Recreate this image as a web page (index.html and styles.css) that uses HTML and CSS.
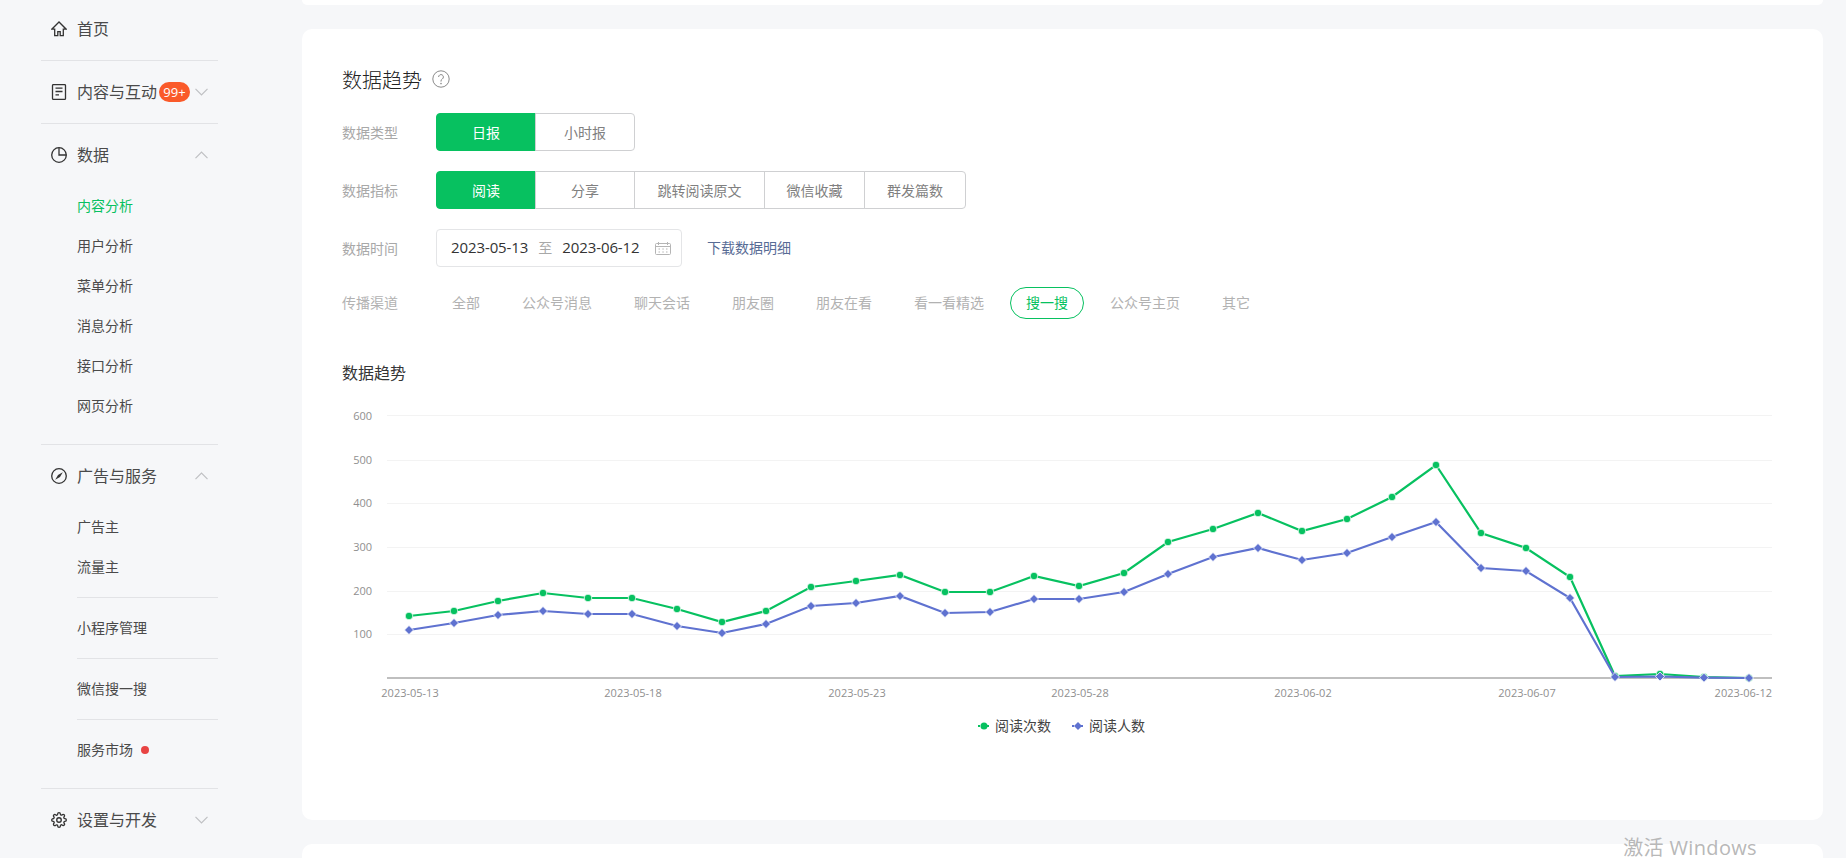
FILE: index.html
```html
<!DOCTYPE html>
<html lang="zh-CN">
<head>
<meta charset="utf-8">
<title>数据趋势</title>
<link rel="stylesheet" href="styles.css">
</head>
<body>
<div class="page">
  <aside class="sidebar">
    <section class="nav-section nav-section--first">
      <div class="nav-row">
        <svg class="nav-icon" viewBox="0 0 16 16"><path d="M8 1 .8 8.200h2.900V14.600h3.100V10.600h2.400V14.600h3.100V8.200h2.900z"/></svg>
        <span>首页</span>
      </div>
    </section>
    <section class="nav-section">
      <div class="nav-row">
        <svg class="nav-icon" viewBox="0 0 16 16"><rect x="1.500" y=".6" width="13" height="14.800" rx="1"/><path d="M4.500 4.200h7M4.500 7.500h7M4.500 10.800h3.500"/></svg>
        <span>内容与互动</span>
        <span class="badge">99+</span>
        <svg class="chevron" viewBox="0 0 13 8"><path d="M.5.8 6.500 6.800 12.500.8"/></svg>
      </div>
    </section>
    <section class="nav-section nav-section--open">
      <div class="nav-row">
        <svg class="nav-icon" viewBox="0 0 16 16"><circle cx="8" cy="8" r="7.300"/><path d="M8 .7V8h7.300"/></svg>
        <span>数据</span>
        <svg class="chevron" viewBox="0 0 13 8"><path d="M.5 7.200 6.500 1.200 12.500 7.200"/></svg>
      </div>
      <div class="sub-list">
        <div class="sub-group">
          <div class="sub-item sub-item--active">内容分析</div>
          <div class="sub-item">用户分析</div>
          <div class="sub-item">菜单分析</div>
          <div class="sub-item">消息分析</div>
          <div class="sub-item">接口分析</div>
          <div class="sub-item">网页分析</div>
        </div>
      </div>
    </section>
    <section class="nav-section nav-section--open">
      <div class="nav-row">
        <svg class="nav-icon" viewBox="0 0 16 16"><circle cx="8" cy="8" r="7.300"/><path class="nav-icon-fill" d="M11.800 4.200 9 9 4.200 11.800 7 7z"/></svg>
        <span>广告与服务</span>
        <svg class="chevron" viewBox="0 0 13 8"><path d="M.5 7.200 6.500 1.200 12.500 7.200"/></svg>
      </div>
      <div class="sub-list">
        <div class="sub-group">
          <div class="sub-item">广告主</div>
          <div class="sub-item">流量主</div>
        </div>
        <div class="sub-group"><div class="sub-item">小程序管理</div></div>
        <div class="sub-group"><div class="sub-item">微信搜一搜</div></div>
        <div class="sub-group">
          <div class="sub-item">服务市场<i class="dot"></i></div>
        </div>
      </div>
    </section>
    <section class="nav-section nav-section--last">
      <div class="nav-row">
        <svg class="nav-icon" viewBox="0 0 24 24"><circle class="nav-icon-thick" cx="12" cy="12" r="3.400"/><path class="nav-icon-thick" d="M19.400 15a1.650 1.650 0 0 0 .33 1.820l.06.06a2 2 0 0 1 0 2.830 2 2 0 0 1-2.830 0l-.06-.06a1.650 1.650 0 0 0-1.820-.33 1.650 1.650 0 0 0-1 1.510V21a2 2 0 0 1-2 2 2 2 0 0 1-2-2v-.09A1.650 1.650 0 0 0 9 19.400a1.650 1.650 0 0 0-1.820.33l-.06.06a2 2 0 0 1-2.830 0 2 2 0 0 1 0-2.830l.06-.06a1.650 1.650 0 0 0 .33-1.820 1.650 1.650 0 0 0-1.510-1H3a2 2 0 0 1-2-2 2 2 0 0 1 2-2h.09A1.650 1.650 0 0 0 4.600 9a1.650 1.650 0 0 0-.33-1.820l-.06-.06a2 2 0 0 1 0-2.830 2 2 0 0 1 2.830 0l.06.06a1.650 1.650 0 0 0 1.820.33H9a1.650 1.650 0 0 0 1-1.510V3a2 2 0 0 1 2-2 2 2 0 0 1 2 2v.09a1.650 1.650 0 0 0 1 1.510 1.650 1.650 0 0 0 1.820-.33l.06-.06a2 2 0 0 1 2.830 0 2 2 0 0 1 0 2.830l-.06.06a1.650 1.650 0 0 0-.33 1.820V9a1.650 1.650 0 0 0 1.510 1H21a2 2 0 0 1 2 2 2 2 0 0 1-2 2h-.09a1.650 1.650 0 0 0-1.510 1z"/></svg>
        <span>设置与开发</span>
        <svg class="chevron" viewBox="0 0 13 8"><path d="M.5.8 6.500 6.800 12.500.8"/></svg>
      </div>
    </section>
  </aside>

  <main class="main">
    <div class="card card--stub"></div>
    <div class="card card--trend">
      <div class="heading">
        <h2 class="heading-title">数据趋势</h2>
        <svg class="help" viewBox="0 0 18 18"><circle cx="9" cy="9" r="8.200"/><path d="M6.600 7a2.400 2.400 0 1 1 3.700 2c-.9.6-1.300 1-1.300 2v.6"/><circle class="help-dot" cx="9" cy="13.600" r=".8"/></svg>
      </div>

      <div class="filter">
        <span class="filter-label">数据类型</span>
        <div class="seg">
          <span class="seg-btn seg-btn--on">日报</span>
          <span class="seg-btn">小时报</span>
        </div>
      </div>

      <div class="filter">
        <span class="filter-label">数据指标</span>
        <div class="seg">
          <span class="seg-btn seg-btn--on">阅读</span>
          <span class="seg-btn">分享</span>
          <span class="seg-btn seg-btn--jump">跳转阅读原文</span>
          <span class="seg-btn seg-btn--fav">微信收藏</span>
          <span class="seg-btn seg-btn--count">群发篇数</span>
        </div>
      </div>

      <div class="filter">
        <span class="filter-label">数据时间</span>
        <div class="date">
          <span class="date-value">2023-05-13</span>
          <span class="date-sep">至</span>
          <span class="date-value">2023-06-12</span>
          <svg class="date-icon" viewBox="0 0 16 13"><rect x=".5" y="1.500" width="15" height="11" rx="1"/><path d="M3.500 0v3M12.500 0v3M.5 4.500h15"/><path class="date-dots" d="M3.500 7h1.500M7.300 7h1.500M11 7h1.500M3.500 10h1.500M7.300 10h1.500M11 10h1.500"/></svg>
        </div>
        <a class="download">下载数据明细</a>
      </div>

      <div class="filter filter--tabs">
        <span class="filter-label filter-label--tabs">传播渠道</span>
        <div class="tabs">
          <span class="tab">全部</span>
          <span class="tab">公众号消息</span>
          <span class="tab">聊天会话</span>
          <span class="tab">朋友圈</span>
          <span class="tab">朋友在看</span>
          <span class="tab">看一看精选</span>
          <span class="tab tab--on">搜一搜</span>
          <span class="tab">公众号主页</span>
          <span class="tab">其它</span>
        </div>
      </div>

      <h3 class="chart-title">数据趋势</h3>

      <svg class="chart" viewBox="342 400 1440 350">
        <defs>
          <marker id="m-green" markerUnits="userSpaceOnUse" markerWidth="12" markerHeight="12" refX="6" refY="6">
            <circle cx="6" cy="6" r="3.800" fill="#07c160" stroke="#fff" stroke-opacity=".75" stroke-width="1"/>
          </marker>
          <marker id="m-blue" markerUnits="userSpaceOnUse" markerWidth="12" markerHeight="12" refX="6" refY="6">
            <path d="M6 1.500 10.500 6 6 10.500 1.500 6z" fill="#5f72d0" stroke="#fff" stroke-opacity=".75" stroke-width="1"/>
          </marker>
        </defs>
        <g class="grid">
          <path d="M387 415.500H1772M387 460.500H1772M387 503.500H1772M387 547.500H1772M387 591.500H1772M387 634.500H1772"/>
        </g>
        <path class="axis" d="M387 678H1772"/>
        <g class="y-labels">
          <text x="372" y="420">600</text>
          <text x="372" y="464">500</text>
          <text x="372" y="507">400</text>
          <text x="372" y="551">300</text>
          <text x="372" y="595">200</text>
          <text x="372" y="638">100</text>
        </g>
        <g class="x-labels">
          <text x="410" y="697">2023-05-13</text>
          <text x="633" y="697">2023-05-18</text>
          <text x="857" y="697">2023-05-23</text>
          <text x="1080" y="697">2023-05-28</text>
          <text x="1303" y="697">2023-06-02</text>
          <text x="1527" y="697">2023-06-07</text>
          <text class="x-label-end" x="1772" y="697">2023-06-12</text>
        </g>
        <polyline class="line line--green" points="409,616 454,611 498,601 543,593 588,598 632,598 677,609 722,622 766,611 811,587 856,581 900,575 945,592 990,592 1034,576 1079,586 1124,573 1168,542 1213,529 1258,513 1302,531 1347,519 1392,497 1436,465 1481,533 1526,548 1570,577 1615,676 1660,674 1704,677 1749,678"/>
        <polyline class="line line--blue" points="409,630 454,623 498,615 543,611 588,614 632,614 677,626 722,633 766,624 811,606 856,603 900,596 945,613 990,612 1034,599 1079,599 1124,592 1168,574 1213,557 1258,548 1302,560 1347,553 1392,537 1436,522 1481,568 1526,571 1570,598 1615,677 1660,676.500 1704,677.700 1749,678"/>
        <g class="legend">
          <path class="legend-line legend-line--green" d="M978 726h12"/>
          <circle cx="984" cy="726" r="3.500" fill="#07c160"/>
          <text x="995" y="731">阅读次数</text>
          <path class="legend-line legend-line--blue" d="M1072 726h12"/>
          <path d="M1078 722 1082 726 1078 730 1074 726z" fill="#5f72d0"/>
          <text x="1089" y="731">阅读人数</text>
        </g>
      </svg>
    </div>
    <div class="card card--next"></div>
  </main>
</div>
<div class="watermark">激活 Windows</div>
</body>
</html>
```

FILE: styles.css
```css
* { box-sizing: border-box; }

html, body {
  margin: 0;
  height: 100%;
  overflow: hidden;
}

body {
  position: relative;
  background: #f6f7f9;
  color: #353535;
  font-family: "Open Sans", "Noto Sans CJK SC", sans-serif;
  font-size: 14px;
}

.page {
  display: flex;
  height: 858px;
  overflow: hidden;
}

/* Sidebar */
.sidebar {
  flex: 0 0 302px;
  padding-left: 41px;
  padding-right: 84px;
}

.nav-section {
  padding: 11px 0;
  border-bottom: 1px solid #e2e3e6;
}
.nav-section--first { padding-top: 9px; }
.nav-section--open { padding-bottom: 8px; }
.nav-section--last { border-bottom: 0; }

.nav-row {
  display: flex;
  align-items: center;
  height: 40px;
  padding: 0 10px;
  font-size: 16px;
  color: #4a4a4a;
}
.nav-row > span { margin-bottom: 2px; }

.nav-icon {
  flex: none;
  width: 16px;
  height: 16px;
  margin-right: 10px;
  fill: none;
  stroke: #333;
  stroke-width: 1.300;
}
.nav-icon .nav-icon-fill { fill: #333; stroke: none; }
.nav-icon .nav-icon-thick { stroke-width: 2; }

.nav-row > .badge {
  flex: none;
  width: 31px;
  height: 20px;
  margin: 0 0 0 2px;
  border-radius: 10px;
  background: #fa5a2a;
  color: #fff;
  font-size: 13px;
  font-weight: 500;
  line-height: 20px;
  text-align: center;
}

.chevron {
  flex: none;
  width: 13px;
  height: 8px;
  margin-left: auto;
  fill: none;
  stroke: #bfc0c3;
  stroke-width: 1.200;
}

.sub-list { margin-top: 1px; }

.sub-group {
  margin-left: 36px;
  padding: 10px 0;
  border-bottom: 1px solid #e2e3e6;
}
.sub-group:last-child { border-bottom: 0; }

.sub-item {
  display: flex;
  align-items: center;
  height: 40px;
  padding-bottom: 2px;
  font-size: 14px;
  color: #4a4a4a;
}
.sub-item--active { color: #07c160; }

.dot {
  width: 8px;
  height: 8px;
  margin: 2px 0 0 8px;
  border-radius: 50%;
  background: #e84343;
}

/* Main */
.main {
  flex: 1;
  display: flex;
  flex-direction: column;
  gap: 24px;
  padding-right: 23px;
  min-width: 0;
}

.card {
  flex: none;
  background: #fff;
  border-radius: 10px;
}
.card--stub {
  height: 5px;
  border-radius: 0 0 10px 10px;
}
.card--trend {
  height: 791px;
  padding: 36px 0 0 40px;
}
.card--next { height: 60px; }

.heading {
  display: flex;
  align-items: center;
  height: 28px;
  margin-bottom: 20px;
}
.heading-title {
  margin: 0;
  padding-top: 3px;
  font-size: 20px;
  font-weight: 300;
  line-height: 25px;
  color: #222;
}
.help {
  width: 18px;
  height: 18px;
  margin-left: 10px;
  fill: none;
  stroke: #8a8a8a;
  stroke-width: 1;
}
.help .help-dot { fill: #8a8a8a; stroke: none; }

.filter {
  display: flex;
  align-items: center;
  height: 38px;
  margin-bottom: 20px;
}
.filter--tabs { height: 32px; margin-bottom: 43px; }

.filter-label {
  flex: none;
  width: 94px;
  margin-bottom: 1px;
  font-size: 14px;
  color: #a8a8a8;
}
.filter-label--tabs { width: 89px; margin-bottom: 2px; color: #b2b2b2; }

.seg { display: flex; }

.seg-btn {
  display: flex;
  align-items: center;
  justify-content: center;
  width: 100px;
  height: 38px;
  margin-left: -1px;
  padding-bottom: 1px;
  border: 1px solid #cfd0d2;
  color: #808080;
  background: #fff;
}
.seg-btn:first-child { margin-left: 0; border-radius: 4px 0 0 4px; }
.seg-btn:last-child { border-radius: 0 4px 4px 0; }
.seg-btn--on {
  background: #07c160;
  border-color: #07c160;
  color: #fff;
}
.seg-btn--jump { width: 131px; }
.seg-btn--fav { width: 101px; }
.seg-btn--count { width: 102px; }

.date {
  display: flex;
  align-items: center;
  width: 246px;
  height: 38px;
  padding: 0 10px 2px 14px;
  border: 1px solid #e4e5e7;
  border-radius: 4px;
  font-size: 15px;
  color: #333;
}
.date-value { letter-spacing: -.1px; }
.date-sep {
  margin: 0 10px;
  font-size: 14px;
  color: #a8a8a8;
}
.date-icon {
  width: 16px;
  height: 13px;
  margin: 2px 0 0 auto;
  fill: none;
  stroke: #b5b5b5;
  stroke-width: 1;
}

.download {
  margin: 0 0 3px 25px;
  color: #576b95;
  font-size: 14px;
}

.tabs { display: flex; }

.tab {
  display: flex;
  align-items: center;
  height: 32px;
  margin: 0 4px;
  padding: 0 16px 2px;
  border: 1px solid transparent;
  border-radius: 16px;
  color: #b2b2b2;
}
.tab--on {
  margin: 0 5px;
  padding: 0 15px 2px;
  border-color: #07c160;
  color: #07c160;
}

.chart-title {
  margin: 0 0 14px;
  padding-bottom: 1px;
  font-size: 16px;
  font-weight: 400;
  line-height: 23px;
  color: #353535;
}

.chart {
  display: block;
  width: 1440px;
  height: 350px;
}
.grid path { fill: none; stroke: #f3f3f3; stroke-width: 1; }
.axis { fill: none; stroke: #bfbfbf; stroke-width: 2; }
.y-labels text {
  fill: #8f8f8f;
  font-size: 11px;
  font-weight: 500;
  text-anchor: end;
}
.x-labels text {
  fill: #8f8f8f;
  font-size: 11px;
  font-weight: 500;
  text-anchor: middle;
}
.x-labels .x-label-end { text-anchor: end; }

.line { fill: none; stroke-width: 2.200; }
.line--green {
  stroke: #07c160;
  marker-start: url(#m-green);
  marker-mid: url(#m-green);
  marker-end: url(#m-green);
}
.line--blue {
  stroke: #5f72d0;
  marker-start: url(#m-blue);
  marker-mid: url(#m-blue);
  marker-end: url(#m-blue);
}

.legend text { fill: #444; font-size: 14px; }
.legend-line { stroke-width: 2; stroke-dasharray: 2 1; fill: none; }
.legend-line--green { stroke: #07c160; }
.legend-line--blue { stroke: #5f72d0; }

.watermark {
  position: absolute;
  right: 89px;
  top: 834px;
  font-size: 20px;
  line-height: 28px;
  letter-spacing: .35px;
  color: #b8b8b8;
}
```
